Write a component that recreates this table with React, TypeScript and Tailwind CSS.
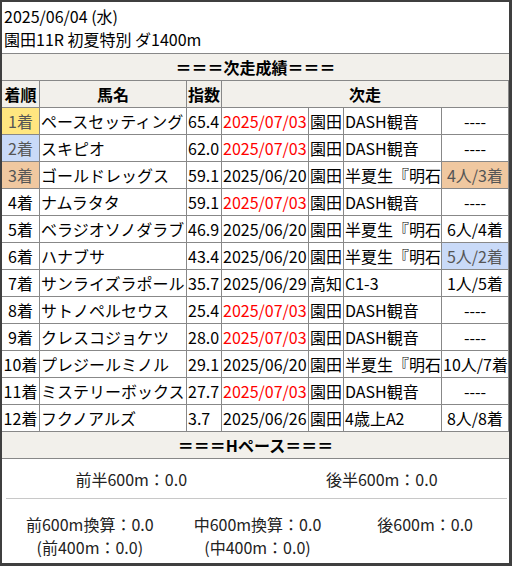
import React from "react";

type Row = {
  rank: number;
  name: string;
  index: string;
  date: string;
  future: boolean;
  venue: string;
  race: string;
  result: string;
};

const rows: Row[] = [
  { rank: 1, name: "ペースセッティング", index: "65.4", date: "2025/07/03", future: true, venue: "園田", race: "DASH観音", result: "----" },
  { rank: 2, name: "スキピオ", index: "62.0", date: "2025/07/03", future: true, venue: "園田", race: "DASH観音", result: "----" },
  { rank: 3, name: "ゴールドレッグス", index: "59.1", date: "2025/06/20", future: false, venue: "園田", race: "半夏生『明石", result: "4人/3着" },
  { rank: 4, name: "ナムラタタ", index: "59.1", date: "2025/07/03", future: true, venue: "園田", race: "DASH観音", result: "----" },
  { rank: 5, name: "ベラジオソノダラブ", index: "46.9", date: "2025/06/20", future: false, venue: "園田", race: "半夏生『明石", result: "6人/4着" },
  { rank: 6, name: "ハナブサ", index: "43.4", date: "2025/06/20", future: false, venue: "園田", race: "半夏生『明石", result: "5人/2着" },
  { rank: 7, name: "サンライズラポール", index: "35.7", date: "2025/06/29", future: false, venue: "高知", race: "C1-3", result: "1人/5着" },
  { rank: 8, name: "サトノペルセウス", index: "25.4", date: "2025/07/03", future: true, venue: "園田", race: "DASH観音", result: "----" },
  { rank: 9, name: "クレスコジョケツ", index: "28.0", date: "2025/07/03", future: true, venue: "園田", race: "DASH観音", result: "----" },
  { rank: 10, name: "プレジールミノル", index: "29.1", date: "2025/06/20", future: false, venue: "園田", race: "半夏生『明石", result: "10人/7着" },
  { rank: 11, name: "ミステリーボックス", index: "27.7", date: "2025/07/03", future: true, venue: "園田", race: "DASH観音", result: "----" },
  { rank: 12, name: "フクノアルズ", index: "3.7", date: "2025/06/26", future: false, venue: "園田", race: "4歳上A2", result: "8人/8着" },
];

// placing colours: 1st / 2nd / 3rd
const placeBg = (pos: string) => {
  if (pos === "1") return "bg-[#ffe680] text-[#555]";
  if (pos === "2") return "bg-[#c9daf8] text-[#555]";
  if (pos === "3") return "bg-[#f0c8a0] text-[#555]";
  return "";
};

const cols = "grid grid-cols-[38px_147px_35px_87px_35px_98px_67px]";
const cell = "border-r border-[#888] px-[1px] overflow-hidden whitespace-nowrap";

export default function App() {
  return (
    <div className="w-[512px] h-[566px] bg-white border-l-2 border-t-2 border-r-[3px] border-b-[3px] border-[#3f3f3f] overflow-hidden font-['Noto_Sans_CJK_JP',sans-serif] text-[16px] text-black">
      {/* Race info */}
      <div className="h-[51px] pt-[3px] pl-[2px] leading-[23px]">
        <p>2025/06/04 (水)</p>
        <p>園田11R 初夏特別 ダ1400m</p>
      </div>

      <div className="h-[28px] border-t border-b border-[#888] bg-[#f2f0eb] font-bold text-center leading-[26px]">
        ＝＝＝次走成績＝＝＝
      </div>

      {/* Table header */}
      <div className={`${cols} h-[27px] border-b border-[#888] bg-[#f2f0eb] font-bold text-center leading-[26px]`}>
        <div className={cell}>着順</div>
        <div className={cell}>馬名</div>
        <div className={cell}>指数</div>
        <div className={`${cell} col-span-4`}>次走</div>
      </div>

      {rows.map((r) => {
        const place = r.result.split("/")[1]?.replace("着", "") ?? "";
        return (
          <div key={r.rank} className={`${cols} h-[27px] border-b border-[#888] leading-[26px]`}>
            <div className={`${cell} text-center ${placeBg(String(r.rank))}`}>{r.rank}着</div>
            <div className={cell}>{r.name}</div>
            <div className={cell}>{r.index}</div>
            <div className={`${cell} ${r.future ? "text-[#ff0000]" : ""}`}>{r.date}</div>
            <div className={cell}>{r.venue}</div>
            <div className={cell}>{r.race}</div>
            <div className={`${cell} text-center ${placeBg(place)}`}>{r.result}</div>
          </div>
        );
      })}

      <div className="h-[27px] border-b border-[#888] bg-[#f2f0eb] font-bold text-center leading-[26px]">
        ＝＝＝Hペース＝＝＝
      </div>

      {/* Pace */}
      <div className="text-[#222] pl-1">
        <div className="grid grid-cols-2 h-[40px] items-center text-center border-b border-[#c8c8c8] mr-[2px]">
          <span>前半600m：0.0</span>
          <span>後半600m：0.0</span>
        </div>
        <div className="grid grid-cols-3 pt-[14px] text-center leading-[23px]">
          <div>
            <p>前600m換算：0.0</p>
            <p>(前400m：0.0)</p>
          </div>
          <div>
            <p>中600m換算：0.0</p>
            <p>(中400m：0.0)</p>
          </div>
          <div>
            <p>後600m：0.0</p>
          </div>
        </div>
      </div>
    </div>
  );
}
